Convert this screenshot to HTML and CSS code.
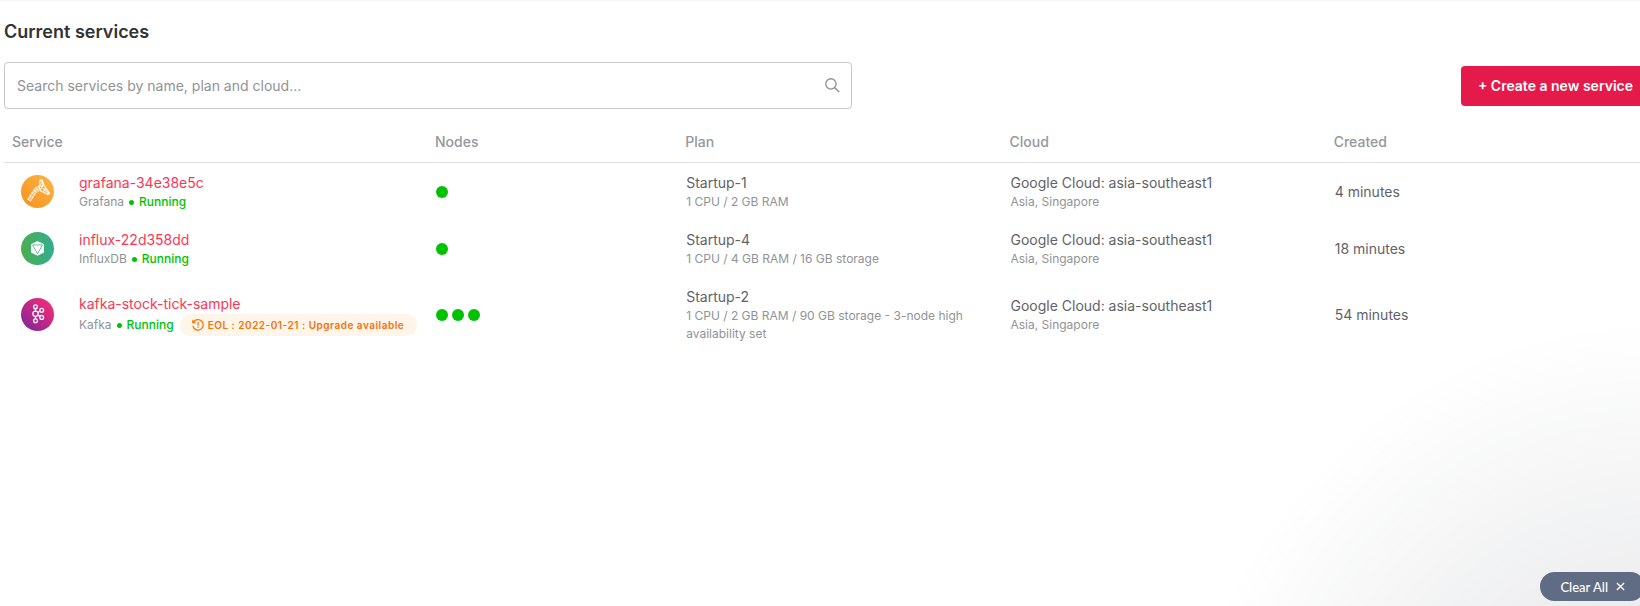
FILE: index.html
```html
<!DOCTYPE html>
<html lang="en">
<head>
<meta charset="utf-8">
<title>Current services</title>
<link rel="stylesheet" href="styles.css">
</head>
<body>
<main class="page">
  <h1 class="title">Current services</h1>
  <div class="toolbar">
    <div class="search">
      <input class="search-input" type="text" aria-label="Search services" placeholder="Search services by name, plan and cloud...">
      <svg class="search-icon" viewBox="0 0 16 16" aria-hidden="true"><circle cx="6.300" cy="6.300" r="5.500"/><path d="m10.300 10.300 4.900 4.700"/></svg>
    </div>
    <button class="create" type="button">+ Create a new service</button>
  </div>
  <table class="services">
    <colgroup><col class="col-service"><col class="col-nodes"><col class="col-wide"><col class="col-wide"><col class="col-wide"></colgroup>
    <thead>
      <tr><th>Service</th><th>Nodes</th><th>Plan</th><th>Cloud</th><th>Created</th></tr>
    </thead>
    <tbody>
      <tr>
        <td>
          <div class="service">
            <svg class="logo" viewBox="0 0 33 33" aria-hidden="true">
              <defs><linearGradient id="g1" x1="0" y1="1" x2="1" y2="0"><stop offset="0" stop-color="#f7911e"/><stop offset="1" stop-color="#fdb544"/></linearGradient></defs>
              <circle cx="16.500" cy="16.500" r="16.500" fill="url(#g1)"/>
              <path d="M18.800 9.800 13.500 13 6 24.600 9.700 26.800 15.300 18 19 15.500z" fill="#fff" opacity=".85"/>
              <path d="M7.500 22.300l4 2.200M9.500 19.200l4 2.200M11.500 16.200l4 2.200M13.700 13.200l3 4M8 25.500l5.200-8.200M16.200 11.700l1.800 4" fill="none" stroke="#f9a12f" stroke-width=".8"/>
              <path d="M18.800 10.200 19 5.200l2.200-.3 1.300 4.600 6 8.700-1.500 1.300-8-4M21 5.500l.2 5M18.800 10.200l8.500 8M19 15l3.200-4.500M22.500 16.500l2-3" fill="none" stroke="#fff" stroke-width="1.100"/>
            </svg>
            <div>
              <a class="name" href="#">grafana-34e38e5c</a>
              <div class="meta"><span>Grafana</span><span class="running">Running</span></div>
            </div>
          </div>
        </td>
        <td><div class="nodes"><i class="node"></i></div></td>
        <td><div class="main">Startup-1</div><div class="sub">1 CPU / 2 GB RAM</div></td>
        <td><div class="main">Google Cloud: asia-southeast1</div><div class="sub">Asia, Singapore</div></td>
        <td><div class="main">4 minutes</div></td>
      </tr>
      <tr>
        <td>
          <div class="service">
            <svg class="logo" viewBox="0 0 33 33" aria-hidden="true">
              <defs><linearGradient id="g2" x1="0" y1="0" x2="1" y2="0"><stop offset="0" stop-color="#4bae4f"/><stop offset="1" stop-color="#33ad92"/></linearGradient></defs>
              <circle cx="16.500" cy="16.500" r="16.500" fill="url(#g2)"/>
              <path d="m16.500 9 6.500 3.300v8.100l-6.500 3.300-6.500-3.300v-8.100z" fill="#fff"/>
              <path d="M11.500 12.900h10l-5 8.900z" fill="none" stroke="#3fae72" stroke-width=".8"/>
            </svg>
            <div>
              <a class="name" href="#">influx-22d358dd</a>
              <div class="meta"><span>InfluxDB</span><span class="running">Running</span></div>
            </div>
          </div>
        </td>
        <td><div class="nodes"><i class="node"></i></div></td>
        <td><div class="main">Startup-4</div><div class="sub">1 CPU / 4 GB RAM / 16 GB storage</div></td>
        <td><div class="main">Google Cloud: asia-southeast1</div><div class="sub">Asia, Singapore</div></td>
        <td><div class="main">18 minutes</div></td>
      </tr>
      <tr>
        <td>
          <div class="service">
            <svg class="logo" viewBox="0 0 33 33" aria-hidden="true">
              <defs><linearGradient id="g3" x1="0" y1="1" x2="1" y2="0"><stop offset=".1" stop-color="#862795"/><stop offset=".85" stop-color="#ee2a7b"/></linearGradient></defs>
              <circle cx="16.500" cy="16.500" r="16.500" fill="url(#g3)"/>
              <g fill="none" stroke="#fff" stroke-width="1.300">
                <circle cx="14.500" cy="8.800" r="1.900"/><circle cx="14.500" cy="15.800" r="2.600"/><circle cx="14.500" cy="22.800" r="1.900"/>
                <circle cx="20.700" cy="12.200" r="1.900"/><circle cx="20.700" cy="19.400" r="1.900"/>
                <path d="M14.500 10.700v2.500M14.500 18.400v2.500M16.800 14.500l2.200-1.300M16.800 17.100l2.200 1.300"/>
              </g>
            </svg>
            <div>
              <a class="name" href="#">kafka-stock-tick-sample</a>
              <div class="meta"><span>Kafka</span><span class="running">Running</span>
                <span class="eol">
                  <svg class="eol-icon" viewBox="0 0 12 12" aria-hidden="true"><path d="M1.500 3.200A5.200 5.200 0 1 1 .9 7M.8.900v2.700h2.700M6.100 3v3.800M6.100 7.600v1.200"/></svg>
                  EOL : 2022-01-21 : Upgrade available
                </span>
              </div>
            </div>
          </div>
        </td>
        <td><div class="nodes"><i class="node"></i><i class="node"></i><i class="node"></i></div></td>
        <td><div class="main">Startup-2</div><div class="sub">1 CPU / 2 GB RAM / 90 GB storage - 3-node high availability set</div></td>
        <td><div class="main">Google Cloud: asia-southeast1</div><div class="sub">Asia, Singapore</div></td>
        <td><div class="main">54 minutes</div></td>
      </tr>
    </tbody>
  </table>
</main>
<div class="glow"></div>
<button class="clear" type="button">Clear All
  <svg class="clear-icon" viewBox="0 0 10 10" aria-hidden="true"><path d="m1 1 8 8M9 1 1 9"/></svg>
</button>
</body>
</html>
```
FILE: styles.css
```css
* {
  box-sizing: border-box;
}

body {
  margin: 0;
  min-height: 100vh;
  overflow: hidden;
  background: #fff;
  border-top: 1px solid #f6f6f7;
  color: #5f6368;
  font-family: Inter, "Liberation Sans", sans-serif;
  font-size: 14px;
  line-height: 20px;
}

.page {
  margin-right: -10px;
  padding: 19px 0 0 4px;
}

.title {
  margin: 0 0 18px;
  color: #333;
  font-size: 18px;
  font-weight: 600;
  line-height: 24px;
}

.toolbar {
  display: flex;
  align-items: center;
  justify-content: space-between;
}

.search {
  position: relative;
  width: 51.5%;
}

.search-input {
  display: block;
  width: 100%;
  height: 47px;
  padding: 0 48px 0 12px;
  border: 1px solid #c4c6c9;
  border-radius: 4px;
  background: #fff;
  color: #333;
  font: inherit;
}

.search-input::placeholder {
  color: #909397;
  opacity: 1;
}

.search-icon {
  position: absolute;
  top: 16px;
  right: 12px;
  width: 15px;
  height: 15px;
  fill: none;
  stroke: #8d9195;
  stroke-width: 1.4;
}

.create {
  height: 40px;
  padding: 0 17px;
  border: 0;
  border-radius: 4px;
  background: #e41a4a;
  color: #fff;
  font: inherit;
  font-weight: 600;
}

.services {
  width: 100%;
  border-collapse: collapse;
  table-layout: fixed;
}

.col-service {
  width: 25.7%;
}

.col-nodes {
  width: 15.2%;
}

.col-wide {
  width: 19.7%;
}

.services th {
  padding: 23px 8px 10px;
  border-bottom: 1px solid #e1e2e3;
  color: #94979b;
  font-weight: 500;
  text-align: left;
}

.services td {
  padding: 10px 9px 9px;
  vertical-align: middle;
}

.service {
  display: flex;
  align-items: center;
  gap: 25px;
  padding-left: 8px;
  white-space: nowrap;
}

.logo {
  flex: none;
  width: 33px;
  height: 33px;
  margin-bottom: 2px;
}

.name {
  display: block;
  color: #ff3554;
  text-decoration: none;
}

.meta {
  display: flex;
  align-items: center;
  color: #909397;
  font-size: 12px;
  line-height: 18px;
}

.running {
  display: flex;
  align-items: center;
  gap: 5px;
  margin-left: 5px;
  color: #00c200;
  font-weight: 500;
}

.running::before {
  width: 5px;
  height: 5px;
  border-radius: 50%;
  background: currentColor;
  content: "";
}

.eol {
  display: flex;
  align-items: center;
  gap: 4px;
  height: 22px;
  margin-left: 6px;
  padding: 0 13px 0 12px;
  border-radius: 11px;
  background: #fff5e8;
  color: #f5720e;
  font-size: 10px;
  font-weight: 600;
  letter-spacing: 0.5px;
}

.eol-icon {
  width: 12px;
  height: 12px;
  fill: none;
  stroke: currentColor;
  stroke-width: 1.2;
}

.nodes {
  display: flex;
  gap: 4px;
}

.node {
  width: 12px;
  height: 12px;
  border-radius: 50%;
  background: #00c200;
}

.sub {
  color: #909397;
  font-size: 12px;
  line-height: 18px;
}

.glow {
  position: fixed;
  right: 0;
  bottom: 0;
  width: 500px;
  height: 300px;
  background: radial-gradient(circle 480px at 520px 494px, rgba(29, 39, 54, 0.14), rgba(29, 39, 54, 0));
  pointer-events: none;
}

.clear {
  position: fixed;
  right: -5px;
  bottom: 5px;
  display: flex;
  align-items: center;
  gap: 8px;
  height: 29px;
  padding: 0 20px;
  border: 0;
  border-radius: 15px;
  background: #5f6c84;
  color: #fff;
  font-family: Lato, "Open Sans", sans-serif;
  font-size: 13px;
  font-weight: 500;
}

.clear-icon {
  width: 9px;
  height: 9px;
  fill: none;
  stroke: #fff;
  stroke-width: 1.5;
}
```
